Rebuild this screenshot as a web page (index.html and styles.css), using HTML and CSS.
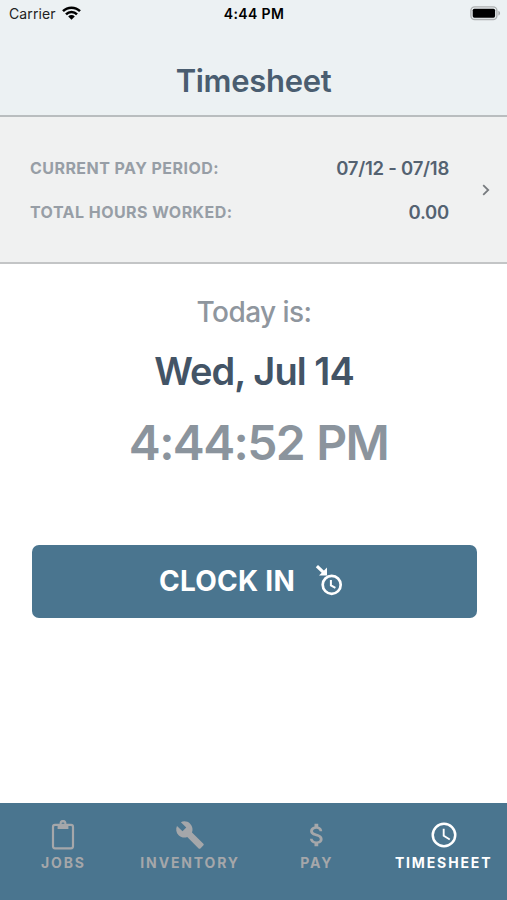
FILE: index.html
```html
<!DOCTYPE html>
<html lang="en">
<head>
<meta charset="utf-8">
<meta name="viewport" content="width=device-width, initial-scale=1">
<title>Timesheet</title>
<link rel="stylesheet" href="styles.css">
</head>
<body>
<div class="app">
  <header class="header">
    <div class="status">
      <div class="carrier"><span class="carrier-name">Carrier</span>
        <svg class="wifi" viewBox="0 0 19 14" width="19" height="14">
          <path d="M1 5.2A12 12 0 0 1 18 5.2M4 8.3A7.7 7.7 0 0 1 15 8.3" fill="none" stroke="#000" stroke-width="2.5"/>
          <path d="M6.2 10.4A4.6 4.6 0 0 1 12.8 10.4L9.5 13.8Z" fill="#000"/>
        </svg>
      </div>
      <span class="status-time">4:44 PM</span>
      <svg class="battery" viewBox="0 0 31 15" width="31" height="15">
        <rect x=".9" y=".9" width="26" height="12.6" rx="3.8" fill="none" stroke="#adb0b1" stroke-width="1.4"/>
        <rect x="2.7" y="2.7" width="22.4" height="9" rx="1.6"/>
        <path d="M28.4 4.8C30.6 5.5 30.6 8.9 28.4 9.6Z" fill="#a4a7a8"/>
      </svg>
    </div>
    <h1 class="title">Timesheet</h1>
  </header>
  <section class="period">
    <div class="rows">
      <div class="row"><span class="label">Current pay period:</span><span class="value">07/12 - 07/18</span></div>
      <div class="row"><span class="label">Total hours worked:</span><span class="value">0.00</span></div>
    </div>
    <svg class="chevron" viewBox="0 0 8 12" width="8" height="12"><path d="M1.2 1.2L6.2 6L1.2 10.8" fill="none" stroke="#777b7f" stroke-width="1.8"/></svg>
  </section>
  <main class="main">
    <div class="today">Today is:</div>
    <div class="date">Wed, Jul 14</div>
    <div class="time">4:44:52 PM</div>
    <button class="clock-in">
      <span class="clock-in-text">CLOCK IN</span>
      <svg viewBox="0 0 28 32" width="28" height="32">
        <circle cx="16.7" cy="19.8" r="9" fill="none" stroke="#fff" stroke-width="2.7"/>
        <path d="M15.9 15V20.4L20.4 22.9" fill="none" stroke="#fff" stroke-width="2"/>
        <path d="M1.9 1.2L8.5 7.4" stroke="#fff" stroke-width="3.2"/>
        <path d="M12 2.6V10.6H4Z" fill="#fff"/>
      </svg>
    </button>
  </main>
  <nav class="tabs">
    <div class="tab">
      <svg viewBox="0 0 30 30" width="30" height="30">
        <rect x="5" y="4.9" width="20" height="23.4" rx="2" fill="none" stroke="currentColor" stroke-width="2.2"/>
        <path fill="currentColor" fill-rule="evenodd" d="M9.6 4H11.7A3.4 3.4 0 1 1 18.3 4H20.4V9H9.6ZM15 2.4A1.4 1.4 0 1 0 15 5.2A1.4 1.4 0 1 0 15 2.4Z"/>
      </svg>
      <span>JOBS</span>
    </div>
    <div class="tab">
      <svg viewBox="0 0 24 24" width="30" height="30"><path fill="currentColor" d="M22.7 19l-9.1-9.1c.9-2.3.4-5-1.5-6.9-2-2-5-2.4-7.4-1.3L9 6 6 9 1.6 4.7C.4 7.1.9 10.1 2.9 12.1c1.9 1.9 4.6 2.4 6.9 1.5l9.1 9.1c.4.4 1 .4 1.4 0l2.3-2.3c.5-.4.5-1.1.1-1.4z"/></svg>
      <span>INVENTORY</span>
    </div>
    <div class="tab">
      <svg viewBox="0 0 24 24" width="30" height="30"><path fill="currentColor" d="M11.8 10.9c-2.27-.59-3-1.2-3-2.15 0-1.09 1.01-1.85 2.7-1.85 1.78 0 2.44.85 2.5 2.1h2.21c-.07-1.72-1.12-3.3-3.21-3.81V3h-3v2.16c-1.94.42-3.5 1.68-3.5 3.61 0 2.31 1.91 3.46 4.7 4.13 2.5.6 3 1.48 3 2.41 0 .69-.49 1.79-2.7 1.79-2.06 0-2.87-.92-2.98-2.1h-2.2c.12 2.19 1.76 3.42 3.68 3.83V21h3v-2.15c1.95-.37 3.5-1.5 3.5-3.55 0-2.84-2.43-3.81-4.7-4.4z"/></svg>
      <span>PAY</span>
    </div>
    <div class="tab active">
      <svg viewBox="0 0 24 24" width="30" height="30"><path fill="currentColor" d="M12 20a8 8 0 0 0 8-8 8 8 0 0 0-8-8 8 8 0 0 0-8 8 8 8 0 0 0 8 8m0-18a10 10 0 0 1 10 10 10 10 0 0 1-10 10A10 10 0 0 1 2 12 10 10 0 0 1 12 2m.5 5v5.25l4.5 2.67-.75 1.23L11 13V7h1.5z"/></svg>
      <span>TIMESHEET</span>
    </div>
  </nav>
</div>
</body>
</html>
```

FILE: styles.css
```css
* { box-sizing: border-box; }

body {
  margin: 0;
  font-family: Inter, "Liberation Sans", sans-serif;
  background: #fff;
}

.app {
  display: flex;
  flex-direction: column;
  width: 507px;
  height: 900px;
  overflow: hidden;
  white-space: nowrap;
}

.header {
  height: 117px;
  background: #ecf1f3;
  border-bottom: 2px solid #b9bdbf;
}

.status {
  display: grid;
  grid-template-columns: 1fr auto 1fr;
  align-items: center;
  height: 27px;
  padding: 0 6px 0 9px;
  color: #000;
}

.carrier { display: flex; align-items: center; gap: 6px; }
.carrier-name { font-size: 14px; letter-spacing: 0.1px; color: #222; }
.wifi { margin-top: -2px; }
.status-time { padding-right: 2px; font-size: 14px; font-weight: 600; letter-spacing: 0.35px; }
.battery { justify-self: end; }

.title {
  margin: 33px 0 0;
  text-align: center;
  font-size: 31px;
  line-height: 42px;
  font-weight: 600;
  letter-spacing: -0.3px;
  color: #4a5d70;
}

.period {
  display: flex;
  align-items: center;
  justify-content: space-between;
  height: 147px;
  padding: 0 17px 0 30px;
  background: #f0f1f1;
  border-bottom: 2px solid #c3c5c6;
}

.rows { width: 419px; }

.row {
  display: flex;
  align-items: center;
  justify-content: space-between;
  height: 44px;
}

.label {
  font-size: 16px;
  font-weight: 700;
  letter-spacing: 0.45px;
  text-transform: uppercase;
  color: #979ea6;
}

.value {
  font-size: 18.5px;
  font-weight: 600;
  letter-spacing: -0.25px;
  color: #546271;
}

.main {
  flex: 1;
  padding: 28px 30.5px 0 31.5px;
  text-align: center;
}

.today {
  font-size: 28px;
  line-height: 40px;
  font-weight: 500;
  letter-spacing: -0.55px;
  color: #8f969e;
}

.date {
  margin-top: 13px;
  font-size: 38px;
  line-height: 52px;
  font-weight: 600;
  letter-spacing: -0.95px;
  color: #435466;
}

.time {
  margin-top: 16px;
  padding-left: 9px;
  font-size: 48px;
  line-height: 60px;
  font-weight: 600;
  letter-spacing: -1.6px;
  word-spacing: 1.5px;
  color: #8b949d;
}

.clock-in {
  display: flex;
  align-items: center;
  justify-content: center;
  gap: 20px;
  width: 100%;
  height: 73px;
  margin-top: 71.5px;
  padding: 0 6px 0 0;
  border: 0;
  border-radius: 7px;
  background: #4a758f;
  color: #fff;
  font-family: inherit;
}

.clock-in-text { font-size: 28px; font-weight: 700; letter-spacing: 0.25px; }

.tabs {
  display: grid;
  grid-template-columns: repeat(4, 1fr);
  height: 97px;
  padding-top: 17px;
  background: #4a758f;
}

.tab {
  display: flex;
  flex-direction: column;
  align-items: center;
  color: #a5a7aa;
  font-size: 14px;
  line-height: 20px;
  font-weight: 700;
  letter-spacing: 1.85px;
}

.tab span { margin-top: 2.5px; }
.active { color: #fff; }
```
